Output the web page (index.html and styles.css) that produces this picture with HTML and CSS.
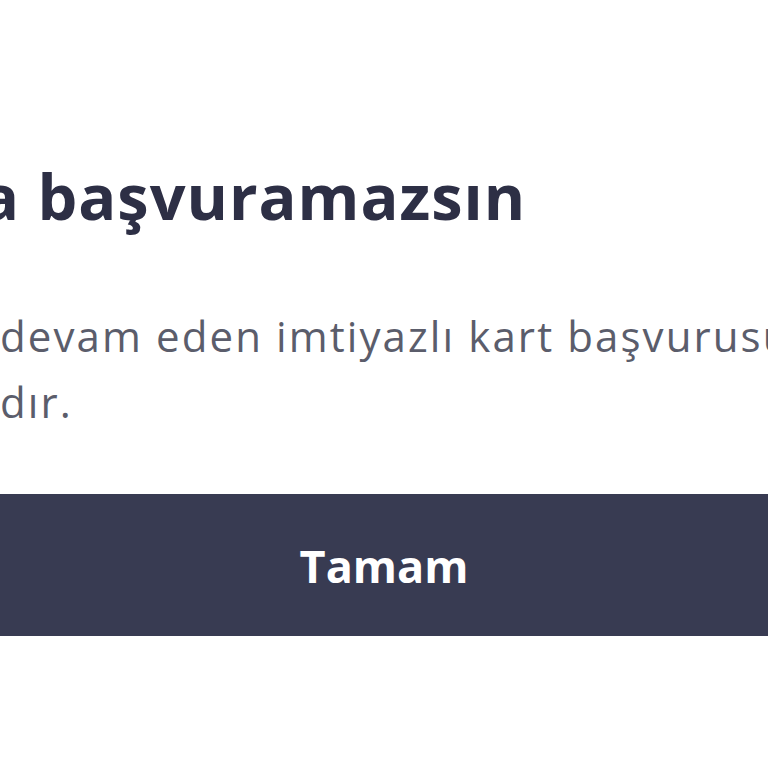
FILE: index.html
```html
<!DOCTYPE html>
<html lang="tr">
<head>
<meta charset="utf-8">
<title>Uyarı</title>
<link rel="stylesheet" href="styles.css">
</head>
<body>
<div class="dialog">
  <h1 class="title">a başvuramazsın</h1>
  <p class="message">
    <span class="line">devam eden imtiyazlı kart başvurusu</span>
    <span class="line">dır.</span>
  </p>
  <button class="btn" type="button">Tamam</button>
</div>
</body>
</html>
```
FILE: styles.css
```css
html, body {
  margin: 0;
  padding: 0;
  background: #ffffff;
  overflow: hidden;
}

.dialog {
  width: 768px;
  height: 768px;
  padding-top: 156px;
  box-sizing: border-box;
  font-family: "Open Sans", Lato, sans-serif;
  font-variant-ligatures: none;
}

.title {
  margin: 0 0 0 -19px;
  white-space: nowrap;
  font-size: 63px;
  line-height: 80px;
  font-weight: 700;
  letter-spacing: 1px;
  color: #2d2f45;
}

.message {
  margin: 67px 0 0;
  font-size: 42px;
  line-height: 66px;
  letter-spacing: 2.1px;
  color: #5b5d6b;
  display: flex;
  flex-direction: column;
}

.line {
  white-space: nowrap;
}

.btn {
  display: block;
  margin-top: 59px;
  margin-left: -20px;
  width: 808px;
  height: 142px;
  border: 0;
  padding: 0;
  background: #383b52;
  color: #ffffff;
  font-family: "Open Sans", Lato, sans-serif;
  font-size: 45px;
  font-weight: 700;
}
```
